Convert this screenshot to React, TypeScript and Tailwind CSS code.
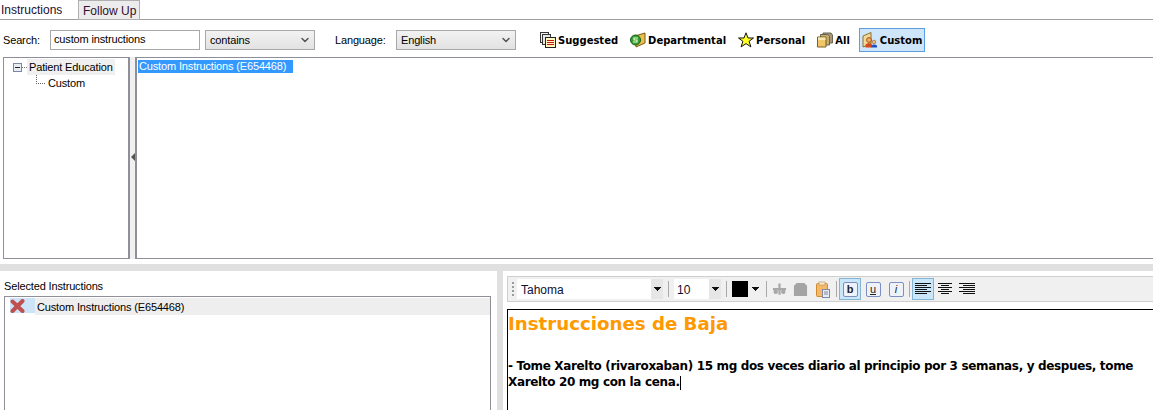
import React from 'react';
import { ChevronDown } from 'lucide-react';

const uiFont = { fontFamily: '"Liberation Sans", Tahoma, sans-serif' };

const SuggestedIcon = () => (
  <svg width="16" height="16" viewBox="0 0 16 16" shapeRendering="crispEdges">
    <rect x="0.5" y="0.5" width="8" height="10" fill="#f3f3f3" stroke="#333" />
    <rect x="2.5" y="2.5" width="8" height="10" fill="#e8e8e8" stroke="#333" />
    <rect x="5.5" y="5.5" width="10" height="10" fill="#fff6c0" stroke="#222" />
    <path d="M7 8.5h7M7 10.5h7M7 12.5h7" stroke="#c01818" />
  </svg>
);

const DepartmentalIcon = () => (
  <svg width="16" height="16" viewBox="0 0 16 16">
    <path d="M5 4 L15 1 V11 L6 15 Z" fill="#e8c050" stroke="#7a5a10" />
    <circle cx="5.5" cy="8" r="5" fill="#35a035" stroke="#155a15" />
    <path d="M8 6 H4 V8 H7 V10 H3" fill="none" stroke="#e8f8c8" strokeWidth="1.2" />
  </svg>
);

const StarIcon = () => (
  <svg width="16" height="16" viewBox="0 0 16 16">
    <path d="M8 .8 10 6h5.5l-4.4 3.3 1.8 5.6L8 11.6l-4.9 3.3 1.8-5.6L.5 6H6z" fill="#ffff20" stroke="#111" />
  </svg>
);

const AllIcon = () => (
  <svg width="16" height="16" viewBox="0 0 16 16">
    <path d="M6 1 H14 L15.5 3 V11 H6 Z" fill="#a89878" stroke="#665" />
    <path d="M3.5 2.5 H11 L12.5 4.5 V13 H3.5 Z" fill="#c8ac70" stroke="#665" />
    <path d="M.5 5 H9 V15 H.5 Z" fill="#f0c868" stroke="#7a6028" />
    <path d="M1 5.5 H8.5 V8 H1 Z" fill="#f8e8b0" />
  </svg>
);

const CustomIcon = () => (
  <svg width="16" height="16" viewBox="0 0 16 16">
    <path d="M1 4 L9 .5 V12 L1 15 Z" fill="#f0d898" stroke="#8a7030" />
    <circle cx="7" cy="8" r="2.4" fill="#f0b060" stroke="#a05010" />
    <path d="M3.5 15.5 V12.5 Q7 9.5 10 12.5 V15.5 Z" fill="#d84818" />
    <circle cx="12" cy="10" r="1.8" fill="#f0c080" stroke="#905020" strokeWidth=".6" />
    <path d="M9.5 15.5 V13.5 Q12 11.5 15 13.5 V15.5 Z" fill="#2050c0" />
  </svg>
);

const RedX = () => (
  <svg width="15" height="14" viewBox="0 0 15 14">
    <path d="M2.5 2.5 L12.5 12 M12.5 2 L2.5 12" stroke="#c05050" strokeWidth="4" strokeLinecap="round" />
  </svg>
);

const CaretDown = () => (
  <svg width="7" height="4" viewBox="0 0 7 4" shapeRendering="crispEdges">
    <path d="M0 0h7L3.5 4z" fill="#111" />
  </svg>
);

const Separator = () => <div className="w-px h-[16px] bg-[#a9a9a9] mx-[3px]" />;

const FormatButton = ({ children, active }: { children: React.ReactNode; active?: boolean }) => (
  <div className={`w-[22px] h-[22px] flex items-center justify-center border ${active ? 'bg-[#c9e7f8] border-[#84b5d2]' : 'border-transparent'}`}>
    {children}
  </div>
);

const LetterChip = ({ letter, className }: { letter: string; className: string }) => (
  <div className={`w-[15px] h-[15px] flex items-center justify-center bg-[#eef2fa] border border-[#7b8fc0] rounded-[2px] text-[11px] leading-none text-[#222] ${className}`}>
    {letter}
  </div>
);

const AlignIcon = ({ rows }: { rows: [number, number][] }) => (
  <svg width="16" height="14" viewBox="0 0 16 14" shapeRendering="crispEdges">
    {rows.map(([x, w], i) => (
      <rect key={i} x={x} y={i * 2 + 1} width={w} height="1" fill="#111" />
    ))}
  </svg>
);

const FilterButton = ({ icon, label, active }: { icon: React.ReactNode; label: string; active?: boolean }) => (
  <div className={`h-[24px] flex items-center gap-[2px] px-[2px] border text-[10px] font-bold tracking-normal text-black whitespace-nowrap ${active ? 'bg-[#cfe5fa] border-[#5c9fe0]' : 'border-transparent'}`} style={{ fontFamily: '"DejaVu Sans", sans-serif' }}>
    {icon}
    <span>{label}</span>
  </div>
);

const FakeSelect = ({ value, className }: { value: string; className: string }) => (
  <div className={`h-[20px] flex items-center justify-between pl-[4px] pr-[3px] border border-[#a8a8a8] bg-gradient-to-b from-[#f2f2f2] to-[#e2e2e2] text-[11px] text-black ${className}`}>
    <span>{value}</span>
    <ChevronDown size={12} strokeWidth={3} className="text-[#555]" />
  </div>
);

export default function App() {
  return (
    <div className="w-[1153px] h-[410px] overflow-hidden bg-white flex flex-col text-black text-[11px] tracking-[-0.15px]" style={uiFont}>
      {/* tabs */}
      <div className="h-[20px] shrink-0 flex items-end border-b border-[#a0a0a0] pl-[1px] text-[12px] tracking-normal">
        <div className="w-[77px] h-[18px] leading-[19px] text-[#1a1030]">Instructions</div>
        <div className="w-[62px] h-[20px] -mb-px bg-[#ececec] border border-[#b0b0b0] pl-[4px] leading-[21px] text-[#301030]">Follow Up</div>
      </div>

      {/* search row */}
      <div className="h-[37px] shrink-0 flex items-center pl-[3px] pt-[3px]">
        <span className="w-[47px]">Search:</span>
        <div className="w-[150px] h-[20px] border border-[#a8a8a8] pl-[3px] leading-[17px]">custom instructions</div>
        <FakeSelect value="contains" className="w-[110px] ml-[5px]" />
        <span className="ml-[20px] w-[61px]">Language:</span>
        <FakeSelect value="English" className="w-[120px]" />
        <div className="ml-[21px] flex items-center gap-[6px]">
          <FilterButton icon={<SuggestedIcon />} label="Suggested" />
          <FilterButton icon={<DepartmentalIcon />} label="Departmental" />
          <FilterButton icon={<StarIcon />} label="Personal" />
          <FilterButton icon={<AllIcon />} label="All" />
          <FilterButton icon={<CustomIcon />} label="Custom" active />
        </div>
      </div>

      {/* tree and results */}
      <div className="h-[202px] shrink-0 flex pl-[3px]">
        <div className="w-[127px] border border-r-2 border-[#8f8f9a]">
          <div className="flex items-center h-[16px] pl-[9px] mt-px">
            <div className="w-[9px] h-[9px] border border-[#7a88a8] bg-[#e8ecf4] flex items-center justify-center">
              <div className="w-[5px] h-px bg-[#222]" />
            </div>
            <div className="w-[5px] border-t border-dotted border-[#777]" />
            <span className="bg-[#f0f0f0] px-[2px] w-[88px] whitespace-nowrap">Patient Education</span>
          </div>
          <div className="flex items-center h-[16px] pl-[32px]">
            <div className="w-[9px] h-[9px] -mt-[8px] border-l border-b border-dotted border-[#666]" />
            <span className="ml-[3px]">Custom</span>
          </div>
        </div>
        <div className="w-[5px] bg-[#f0f0f0] flex items-center justify-center pb-[2px]">
          <div className="w-0 h-0 border-y-[4px] border-y-transparent border-r-[4px] border-r-[#555]" />
        </div>
        <div className="flex-1 border-l-2 border-t border-b border-[#8f8f9a] pl-px pt-[2px]">
          <div className="w-[155px] h-[13px] leading-[13px] pl-px bg-[#3399ff] text-white whitespace-nowrap">Custom Instructions (E654468)</div>
        </div>
      </div>

      {/* splitter */}
      <div className="h-[5px] shrink-0" />
      <div className="h-[7px] shrink-0 bg-[#e0e0e0]" />

      {/* bottom panes */}
      <div className="flex-1 flex min-h-0">
        <div className="w-[497px] shrink-0 pl-[4px] pr-[6px] flex flex-col pt-[8px]">
          <div className="h-[17px] leading-[14px]">Selected Instructions</div>
          <div className="flex-1 border-l border-r border-t border-[#8f8f9a] pt-px pl-[5px]">
            <div className="flex h-[18px] items-start">
              <div className="w-[25px] h-[15px] bg-[#cde4f8] flex items-center">
                <RedX />
              </div>
              <div className="flex-1 h-[17px] bg-[#eeeeee] pl-[2px] leading-[19px] whitespace-nowrap">Custom Instructions (E654468)</div>
            </div>
          </div>
        </div>
        <div className="w-[6px] shrink-0 bg-[#e0e0e0]" />
        <div className="flex-1 flex flex-col bg-white pt-[5px]">
          <div className="h-[26px] shrink-0 ml-[4px] bg-[#f0f0f0] border-y border-l border-[#cfcfcf] flex items-center pl-[4px] gap-[2px]">
            <div className="w-[2px] h-[14px] border-l-2 border-dotted border-[#999] mr-[1px]" />
            <div className="w-[146px] h-[20px] bg-white flex items-center justify-between pl-[4px] text-[12px] tracking-normal text-[#101030]">
              <span className="pt-px">Tahoma</span>
              <div className="w-[12px] h-full bg-[#e6e6e6] flex items-center justify-center"><CaretDown /></div>
            </div>
            <Separator />
            <div className="w-[47px] h-[20px] bg-white flex items-center justify-between pl-[3px] text-[12px] tracking-normal text-[#101030]">
              <span className="pt-px">10</span>
              <div className="w-[12px] h-full bg-[#e6e6e6] flex items-center justify-center"><CaretDown /></div>
            </div>
            <Separator />
            <div className="w-[16px] h-[16px] bg-black" />
            <div className="px-[2px]"><CaretDown /></div>
            <Separator />
            <div className="flex items-center">
              <svg width="15" height="14" viewBox="0 0 16 14">
                <path d="M8 1v12M1 7h14" stroke="#a8a8a8" strokeWidth="2.4" />
                <circle cx="4" cy="10" r="2.4" fill="#a8a8a8" />
                <circle cx="12" cy="10" r="2.4" fill="#a8a8a8" />
              </svg>
              <svg width="15" height="15" viewBox="0 0 16 16" className="ml-[6px]">
                <path d="M4 1h8l3 3v11H1V4z" fill="#a4a4a4" />
              </svg>
              <svg width="16" height="17" viewBox="0 0 16 17" className="ml-[7px]">
                <rect x="1.5" y="2.5" width="11" height="13" rx="1" fill="#f4b868" stroke="#d08a30" />
                <rect x="4" y="1" width="6" height="3" fill="#f8e8c8" stroke="#b09060" strokeWidth=".6" />
                <rect x="7.5" y="8.5" width="7" height="8" fill="#e8ecf4" stroke="#8088a0" />
                <path d="M9 11h4M9 13h4" stroke="#8088a0" />
              </svg>
            </div>
            <div className="w-px h-[16px] bg-[#a9a9a9] ml-[3px]" />
            <div className="flex items-center gap-px">
              <FormatButton active><LetterChip letter="b" className="font-bold" /></FormatButton>
              <FormatButton><LetterChip letter="u" className="underline" /></FormatButton>
              <FormatButton><LetterChip letter="i" className="italic" /></FormatButton>
            </div>
            <div className="w-px h-[16px] bg-[#a9a9a9]" />
            <div className="flex items-center">
              <FormatButton active><AlignIcon rows={[[0, 16], [0, 12], [0, 16], [0, 12], [0, 16], [0, 12]]} /></FormatButton>
              <FormatButton><AlignIcon rows={[[1, 14], [4, 8], [1, 14], [4, 8], [1, 14], [4, 8]]} /></FormatButton>
              <FormatButton><AlignIcon rows={[[0, 16], [4, 12], [0, 16], [4, 12], [0, 16], [4, 12]]} /></FormatButton>
            </div>
          </div>
          <div className="flex-1 mt-[7px] ml-[4px] border-t border-l border-black pt-[3px] tracking-normal" style={{ fontFamily: '"DejaVu Sans", sans-serif' }}>
            <div className="text-[18.2px] font-bold leading-[22px] text-[#ff9900] whitespace-nowrap">Instrucciones de Baja</div>
            <div className="mt-[23px] text-[12px] font-bold leading-[16px] tracking-[-0.35px] whitespace-nowrap">
              - Tome Xarelto (rivaroxaban) 15 mg dos veces diario al principio por 3 semanas, y despues, tome
              <br />
              Xarelto 20 mg con la cena.<span className="inline-block w-px h-[14px] bg-black align-middle" />
            </div>
          </div>
        </div>
      </div>
    </div>
  );
}
